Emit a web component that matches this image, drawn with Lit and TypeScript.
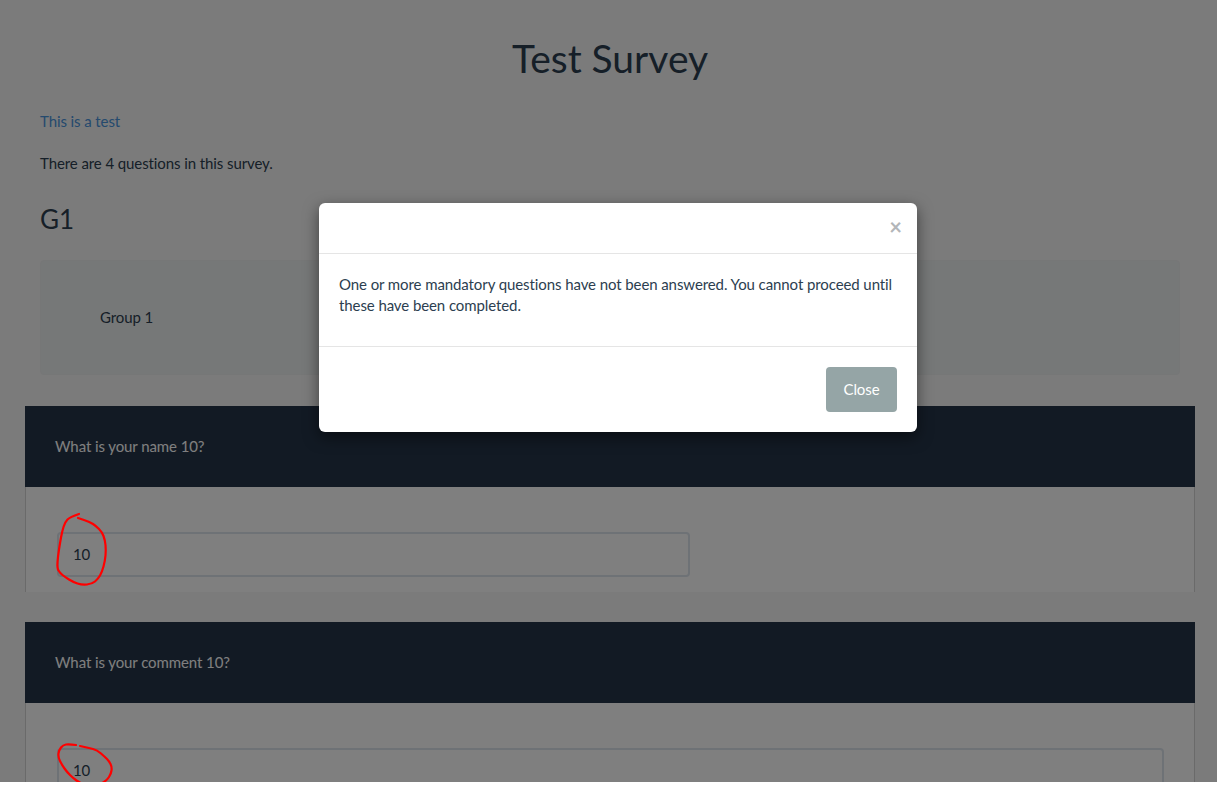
import { LitElement, html, css, svg } from 'lit';
import { customElement } from 'lit/decorators.js';

type Point = [number, number];

// hand-drawn pen marks, traced from the reference
const markOne: Point[] = [[79, 514], [70, 517], [65, 522], [62, 532], [60, 543], [58, 556], [57, 568], [60, 573], [65, 577], [73, 582], [82, 585], [92, 584], [98, 579], [102, 572], [105, 561], [106, 550], [105, 540], [102, 532], [96, 526], [90, 522], [78, 518]];
const markTwo: Point[] = [[76, 745], [69, 744], [63, 745], [59, 750], [58, 757], [62, 765], [67, 772], [73, 778], [80, 783], [86, 785], [93, 786], [101, 784], [107, 780], [111, 774], [112, 767], [109, 761], [105, 757], [97, 750], [89, 748], [80, 746]];

// quadratic curves through the midpoints, so the trace stays smooth
function smooth(points: Point[]) {
  let d = `M${points[0][0]} ${points[0][1]}`;
  for (let i = 1; i < points.length - 1; i++) {
    const [x, y] = points[i];
    const [nx, ny] = points[i + 1];
    d += ` Q${x} ${y} ${(x + nx) / 2} ${(y + ny) / 2}`;
  }
  const [lx, ly] = points[points.length - 1];
  return `${d} L${lx} ${ly}`;
}

@customElement('app-root')
export class AppRoot extends LitElement {
  static styles = css`
    :host {
      display: block;
      position: relative;
      font-family: 'Lato', 'Liberation Sans', sans-serif;
      font-size: 15px;
      line-height: 21px;
      letter-spacing: -0.09px;
      color: #2c3e50;
    }

    .screen {
      position: relative;
      height: 782px;
      overflow: hidden;
      background: #f6f6f6;
    }

    .page {
      padding: 37px 37px 0 40px;
    }

    h1 {
      margin: 0 0 31px;
      font-size: 39px;
      line-height: 43px;
      font-weight: 400;
      letter-spacing: 0;
      text-align: center;
    }

    p {
      margin: 0 0 21px;
    }

    .intro {
      color: #4a94dc;
    }

    h2 {
      margin: 31px 0 26px;
      font-size: 26px;
      line-height: 29px;
      font-weight: 400;
      letter-spacing: 0;
    }

    .well {
      height: 115px;
      box-sizing: border-box;
      display: flex;
      align-items: center;
      padding: 0 59px;
      margin-bottom: 31px;
      background: #ecf0f1;
      border: 1px solid #eceeef;
      border-radius: 4px;
    }

    .question {
      margin: 0 -15px 30px;
      width: 1170px;
    }

    .question-head {
      height: 81px;
      display: flex;
      align-items: center;
      padding: 0 30px;
      background: #243448;
      color: #fff;
    }

    .question-body {
      height: 105px;
      box-sizing: border-box;
      padding: 45px 30px 0 31px;
      border: solid #d4d4d4;
      border-width: 0 1px;
      background: #fff;
    }

    .field {
      height: 45px;
      box-sizing: border-box;
      padding: 0 14px;
      display: flex;
      align-items: center;
      border: 2px solid #dce4ec;
      border-radius: 4px;
    }

    .short {
      width: 633px;
    }

    .wide {
      width: 1107px;
    }

    .backdrop {
      position: absolute;
      inset: 0;
      background: rgba(0, 0, 0, 0.5);
    }

    .ink {
      position: absolute;
      left: 0;
      top: 0;
      width: 1217px;
      height: 786px;
      fill: none;
      stroke: #ff0000;
      stroke-width: 2.2;
      stroke-linecap: round;
      stroke-linejoin: round;
    }

    .modal {
      position: absolute;
      left: 319px;
      top: 203px;
      width: 598px;
      height: 229px;
      background: #fff;
      border-radius: 6px;
      box-shadow: 0 5px 15px rgba(0, 0, 0, 0.5);
    }

    .modal-head {
      height: 51px;
      box-sizing: border-box;
      display: flex;
      justify-content: flex-end;
      align-items: center;
      padding: 0 15px 2px 0;
      border-bottom: 1px solid #e5e5e5;
    }

    .close-x {
      font-size: 22px;
      font-weight: 700;
      color: #b3b6b9;
      line-height: 20px;
    }

    .modal-body {
      height: 93px;
      box-sizing: border-box;
      padding: 20px;
      border-bottom: 1px solid #e5e5e5;
    }

    .modal-body p {
      margin: 0;
    }

    .modal-foot {
      display: flex;
      justify-content: flex-end;
      padding: 20px;
    }

    .btn {
      width: 71px;
      height: 45px;
      display: flex;
      align-items: center;
      justify-content: center;
      background: #95a5a6;
      color: #fff;
      border-radius: 4px;
    }
  `;

  protected render() {
    return html`
      <div class="screen">
        <div class="page">
          <h1>Test Survey</h1>
          <p class="intro">This is a test</p>
          <p>There are 4 questions in this survey.</p>
          <h2>G1</h2>
          <div class="well">Group 1</div>
          <div class="question">
            <div class="question-head">What is your name 10?</div>
            <div class="question-body"><div class="field short">10</div></div>
          </div>
          <div class="question">
            <div class="question-head">What is your comment 10?</div>
            <div class="question-body"><div class="field wide">10</div></div>
          </div>
        </div>
        <div class="backdrop"></div>
        <div class="modal">
          <div class="modal-head"><span class="close-x">×</span></div>
          <div class="modal-body">
            <p>One or more mandatory questions have not been answered. You cannot proceed until these have been completed.</p>
          </div>
          <div class="modal-foot"><div class="btn">Close</div></div>
        </div>
      </div>
      <svg class="ink" viewBox="0 0 1217 786">
        ${svg`<path d=${smooth(markOne)} />`}
        ${svg`<path d=${smooth(markTwo)} />`}
      </svg>
    `;
  }
}
